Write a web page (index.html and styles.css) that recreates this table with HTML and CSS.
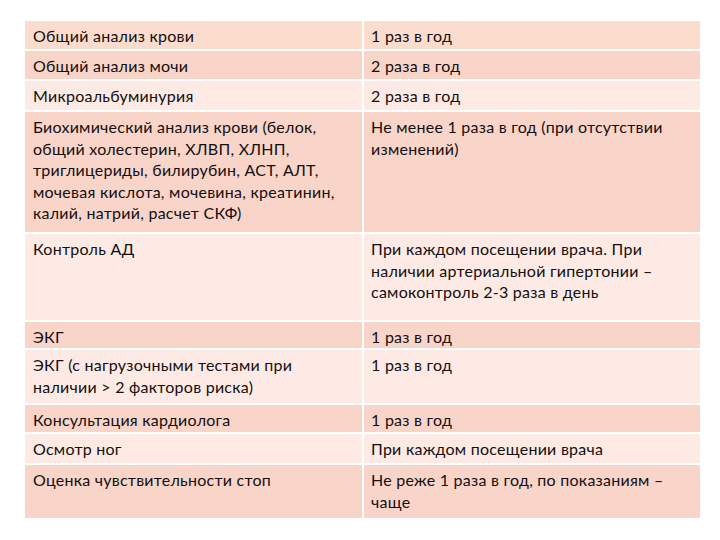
FILE: index.html
```html
<!DOCTYPE html>
<html lang="ru">
<head>
<meta charset="utf-8">
<link rel="stylesheet" href="styles.css">
</head>
<body>
<div class="table">
  <div class="cell c1 r-peach">Общий анализ крови</div>
  <div class="cell c2 r-peach">1 раз в год</div>

  <div class="cell c1 r-dark">Общий анализ мочи</div>
  <div class="cell c2 r-dark">2 раза в год</div>

  <div class="cell c1 r-light">Микроальбуминурия</div>
  <div class="cell c2 r-light">2 раза в год</div>

  <div class="cell c1 r-dark">Биохимический анализ крови (белок, общий холестерин, ХЛВП, ХЛНП, триглицериды, билирубин, АСТ, АЛТ, мочевая кислота, мочевина, креатинин, калий, натрий, расчет СКФ)</div>
  <div class="cell c2 r-dark">Не менее 1 раза в год (при отсутствии изменений)</div>

  <div class="cell c1 r-light">Контроль АД</div>
  <div class="cell c2 r-light">При каждом посещении врача. При наличии артериальной гипертонии – самоконтроль 2-3 раза в день</div>

  <div class="cell c1 r-dark">ЭКГ</div>
  <div class="cell c2 r-dark">1 раз в год</div>

  <div class="cell c1 r-light">ЭКГ (с нагрузочными тестами при наличии &gt; 2 факторов риска)</div>
  <div class="cell c2 r-light">1 раз в год</div>

  <div class="cell c1 r-dark">Консультация кардиолога</div>
  <div class="cell c2 r-dark">1 раз в год</div>

  <div class="cell c1 r-light">Осмотр ног</div>
  <div class="cell c2 r-light">При каждом посещении врача</div>

  <div class="cell c1 r-dark">Оценка чувствительности стоп</div>
  <div class="cell c2 r-dark">Не реже 1 раза в год, по показаниям – чаще</div>
</div>
</body>
</html>
```
FILE: styles.css
```css
html, body {
  margin: 0;
  padding: 0;
  background: #ffffff;
}
body {
  font-family: "Lato", "Open Sans", sans-serif;
  color: #141010;
}
.table {
  display: grid;
  grid-template-columns: 337px 336px;
  grid-template-rows: 28px 28px 29px 120px 86px 26px 53px 27px 29px 53px;
  gap: 2px;
  margin: 21px 0 0 25px;
  width: 675px;
}
.cell {
  padding: 4px 8px 0 8px;
  font-size: 16px;
  line-height: 21.5px;
  letter-spacing: 0.25px;
}
.c2 {
  padding-left: 7px;
  padding-right: 6px;
}
.r-peach { background: #fcdccc; }
.r-dark { background: #f9d4c9; }
.r-light { background: #fdeae4; }
```
